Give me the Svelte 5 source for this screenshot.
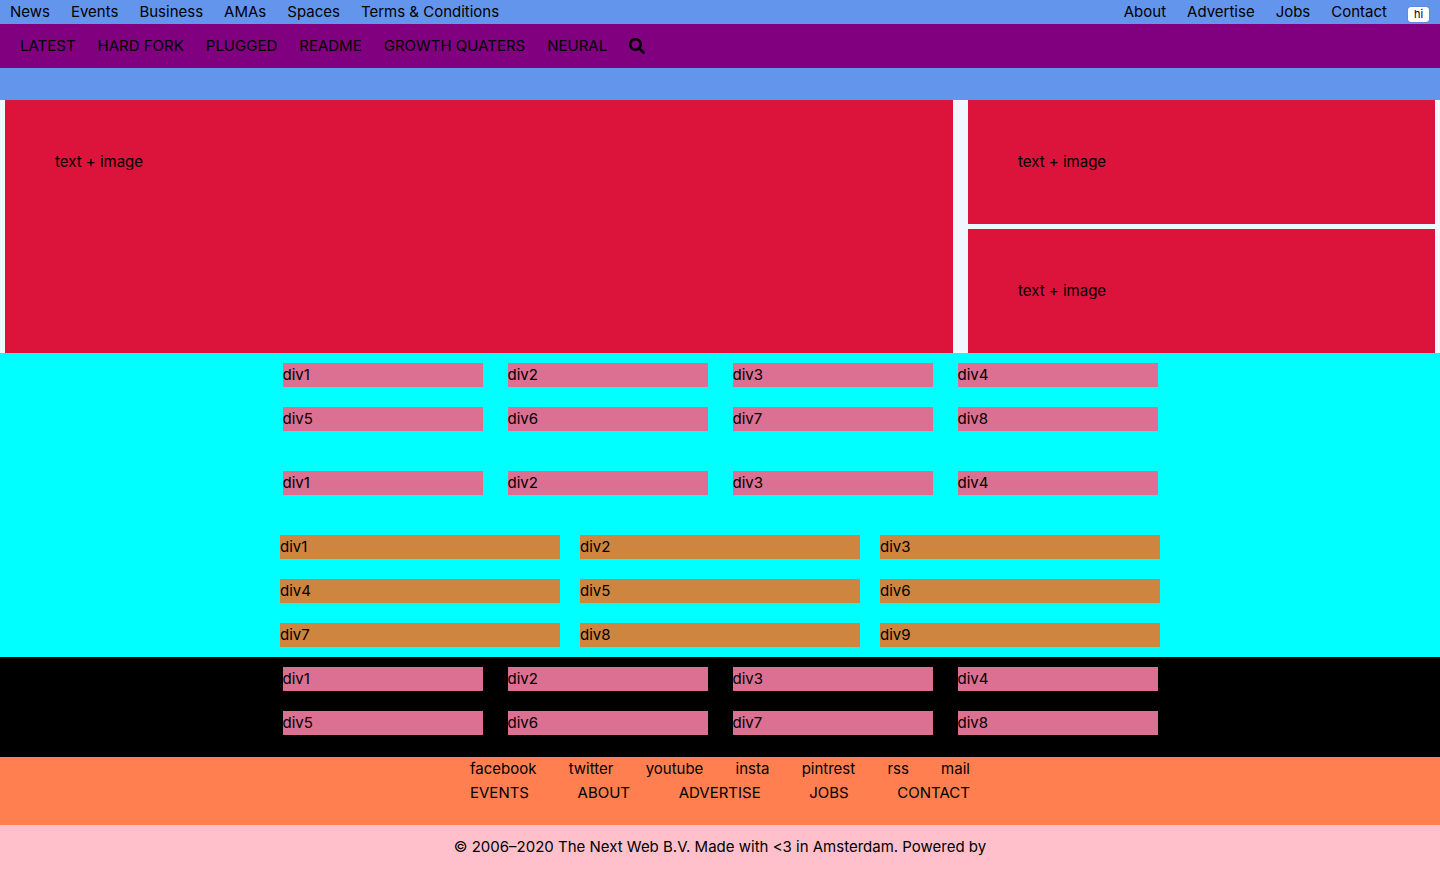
<script>
  const topLeft = ['News', 'Events', 'Business', 'AMAs', 'Spaces', 'Terms & Conditions'];
  const topRight = ['About', 'Advertise', 'Jobs', 'Contact'];
  const sections = ['LATEST', 'HARD FORK', 'PLUGGED', 'README', 'GROWTH QUATERS', 'NEURAL'];
  const social = ['facebook', 'twitter', 'youtube', 'insta', 'pintrest', 'rss', 'mail'];
  const company = ['EVENTS', 'ABOUT', 'ADVERTISE', 'JOBS', 'CONTACT'];
  const divs = (count) => Array.from({ length: count }, (_, i) => `div${i + 1}`);
</script>

{#snippet cards(count, kind)}
  <div class="cards {kind}">
    {#each divs(count) as name}
      <div class="card">{name}</div>
    {/each}
  </div>
{/snippet}

{#snippet links(items)}
  {#each items as item}
    <li><a href="#top">{item}</a></li>
  {/each}
{/snippet}

<header id="top">
  <nav class="topbar" aria-label="Site">
    <ul>{@render links(topLeft)}</ul>
    <ul>
      {@render links(topRight)}
      <li class="action"><button type="button">hi</button></li>
    </ul>
  </nav>
  <nav class="sections" aria-label="Sections">
    <ul>
      {@render links(sections)}
      <li>
        <a class="search" href="#top" aria-label="Search">
          <svg viewBox="0 0 512 512" width="16" height="16" aria-hidden="true">
            <path d="M505 442.7L405.3 343c-4.500-4.500-10.600-7-17-7H372c27.600-35.300 44-79.700 44-128C416 93.100 322.900 0 208 0S0 93.100 0 208s93.100 208 208 208c48.300 0 92.700-16.400 128-44v16.300c0 6.400 2.500 12.500 7 17l99.700 99.700c9.400 9.400 24.600 9.400 33.900 0l28.300-28.300c9.400-9.400 9.400-24.600.1-34zM208 336c-70.700 0-128-57.200-128-128 0-70.700 57.200-128 128-128 70.700 0 128 57.200 128 128 0 70.700-57.200 128-128 128z" />
          </svg>
        </a>
      </li>
    </ul>
  </nav>
  <div class="strip"></div>
</header>

<main>
  <section class="hero">
    <article class="lead">text + image</article>
    <article>text + image</article>
    <article>text + image</article>
  </section>
  <section class="feed">
    {@render cards(8, 'four')}
    {@render cards(4, 'four')}
    {@render cards(9, 'three')}
  </section>
  <section class="feed dark">
    {@render cards(8, 'four')}
  </section>
</main>

<footer>
  <div class="footer-links">
    <ul>{@render links(social)}</ul>
    <ul>{@render links(company)}</ul>
  </div>
  <p>© 2006–2020 The Next Web B.V. Made with &lt;3 in Amsterdam. Powered by</p>
</footer>

<style>
  :global(body) {
    margin: 0;
    background: #fff;
    color: #000;
    font-family: Inter, 'Liberation Sans', sans-serif;
    font-size: 15px;
    line-height: 24px;
  }

  ul {
    display: flex;
    margin: 0;
    padding: 0;
    list-style: none;
  }

  a {
    color: inherit;
    text-decoration: none;
  }

  .topbar {
    display: flex;
    justify-content: space-between;
    padding: 0 10px;
    background: cornflowerblue;
  }

  .topbar ul {
    gap: 21px;
  }

  .sections ul {
    gap: 22px;
  }

  .action {
    display: flex;
    align-items: flex-end;
    padding: 0 1px 2px 0;
  }

  button {
    width: 21px;
    height: 15px;
    padding: 0;
    border: 0;
    border-radius: 3px;
    background: #fff;
    box-shadow: 0 0 1px rgb(0 0 0 / 50%);
    color: #000;
    font-family: inherit;
    font-size: 11px;
    line-height: 15px;
  }

  .sections {
    padding: 10px 20px;
    background: purple;
  }

  .search {
    display: flex;
    align-items: center;
    height: 24px;
  }

  .strip {
    height: 32px;
    background: cornflowerblue;
  }

  .hero {
    display: grid;
    grid-template-columns: 67fr 33fr;
    gap: 5px 15px;
    padding: 0 5px;
    background: aliceblue;
  }

  .hero article {
    padding: 50px;
    background: crimson;
  }

  .hero .lead {
    grid-row: span 2;
  }

  .feed {
    display: grid;
    gap: 40px;
    padding: 10px;
    background: aqua;
  }

  .dark {
    padding-bottom: 22px;
    background: #000;
  }

  .cards {
    display: grid;
    justify-content: center;
  }

  .four {
    grid-template-columns: repeat(4, 200px);
    gap: 20px 25px;
  }

  .three {
    grid-template-columns: repeat(3, 280px);
    gap: 20px;
  }

  .four .card {
    background: palevioletred;
  }

  .three .card {
    background: peru;
  }

  .footer-links {
    padding-bottom: 20px;
    background: coral;
  }

  .footer-links ul {
    justify-content: space-between;
    max-width: 500px;
    margin: 0 auto;
  }

  footer p {
    margin: 0;
    padding: 10px;
    background: pink;
    text-align: center;
  }
</style>
